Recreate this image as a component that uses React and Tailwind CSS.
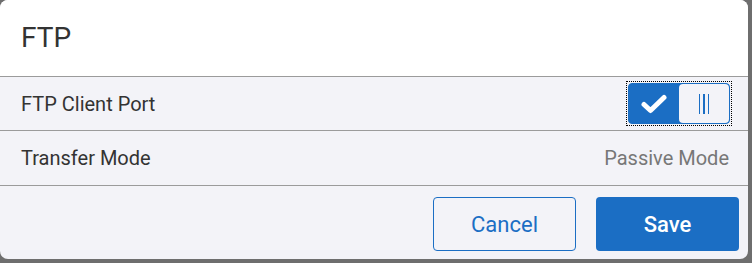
import React from "react";

export default function App() {
  return (
    <div className="w-[752px] h-[263px] bg-[#6e6e6e]">
      <div className="w-[748px] h-[259px] bg-[#f3f3f8] rounded-[8px] overflow-hidden flex flex-col font-['Roboto',sans-serif]">
        <div className="h-[77px] bg-white border-b border-[#9b9b9b] flex items-center pl-[21px] text-[28px] text-[#333] shrink-0">
          FTP
        </div>
        <div className="h-[54px] border-b border-[#9b9b9b] flex items-center justify-between pl-[21px] pr-[17px] text-[20px] text-[#333] shrink-0">
          <span>FTP Client Port</span>
          <div className="outline-1 outline-dotted outline-black p-[1px]">
            <div className="w-[102px] h-[41px] rounded-[4px] bg-[#1b6ec4] border border-[#1b6ec4] flex">
              <div className="w-[50px] h-full flex items-center justify-center">
                <svg width="26" height="20" viewBox="0 0 26 20">
                  <path d="M3 10.5 L9.5 16.5 L23 3.5" fill="none" stroke="white" strokeWidth="5" strokeLinecap="round" strokeLinejoin="round" />
                </svg>
              </div>
              <div className="flex-1 h-full bg-[#f3f3f8] rounded-[4px] flex items-center justify-center gap-[3px]">
                <div className="w-[1.5px] h-[20px] bg-[#1b6ec4]" />
                <div className="w-[1.5px] h-[20px] bg-[#1b6ec4]" />
                <div className="w-[1.5px] h-[20px] bg-[#1b6ec4]" />
              </div>
            </div>
          </div>
        </div>
        <div className="h-[55px] border-b border-[#9b9b9b] flex items-center justify-between pl-[21px] pr-[19px] text-[20px] shrink-0">
          <span className="text-[#333]">Transfer Mode</span>
          <span className="text-[#777]">Passive Mode</span>
        </div>
        <div className="flex-1 flex justify-end items-start pt-[11px] pr-[9px] gap-[20px]">
          <button className="w-[143px] h-[54px] rounded-[4px] border border-[#1b6ec4] text-[#1b6ec4] text-[22px] bg-[#f3f3f8]">
            Cancel
          </button>
          <button className="w-[143px] h-[54px] rounded-[4px] bg-[#1b6ec4] text-white text-[22px] font-medium">
            Save
          </button>
        </div>
      </div>
    </div>
  );
}
